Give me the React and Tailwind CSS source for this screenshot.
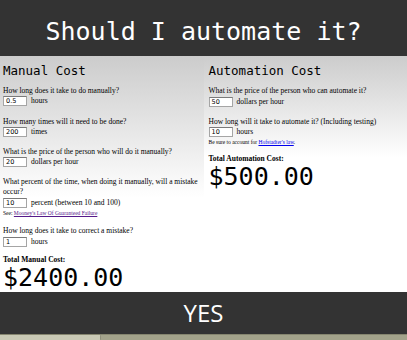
import React from "react";

const serif = { fontFamily: '"Liberation Serif", "Times New Roman", serif' };

function Field({ value, unit }) {
  return (
    <div className="flex items-center h-[10px]">
      <div className="w-[24px] h-[10px] bg-white border border-[#a5a5a5] border-t-[#7a7a7a] text-[6.5px] leading-[8px] pl-[2px] text-black" style={{ fontFamily: '"DejaVu Sans", sans-serif' }}>
        {value}
      </div>
      <span className="ml-[4px] text-[7.5px] leading-[10px]">{unit}</span>
    </div>
  );
}

function Question({ children }) {
  return <div className="text-[7.5px] leading-[10px]">{children}</div>;
}

export default function App() {
  return (
    <div className="w-[407px] h-[340px] flex flex-col bg-white overflow-hidden text-black" style={serif}>
      <div className="h-[56px] bg-[#333333] text-white text-center text-[25px] leading-[28px] pt-[18px]" style={{ fontFamily: '"DejaVu Sans Mono", monospace' }}>
        Should I automate it?
      </div>
      <div className="grid grid-cols-2 items-start flex-1">
        <div className="bg-gradient-to-b from-[#cccccc] to-white to-60% pl-[3px] pt-[7px] pb-[2px] h-full">
          <div className="text-[12.5px] leading-[15px]" style={{ fontFamily: '"DejaVu Sans Mono", monospace' }}>Manual Cost</div>
          <div className="mt-[8px]">
            <Question>How long does it take to do manually?</Question>
            <Field value="0.5" unit="hours" />
          </div>
          <div className="mt-[11px]">
            <Question>How many times will it need to be done?</Question>
            <Field value="200" unit="times" />
          </div>
          <div className="mt-[10px]">
            <Question>What is the price of the person who will do it manually?</Question>
            <Field value="20" unit="dollars per hour" />
          </div>
          <div className="mt-[10px]">
            <Question>What percent of the time, when doing it manually, will a mistake occur?</Question>
            <div className="mt-[1px]"><Field value="10" unit="percent (between 10 and 100)" /></div>
            <div className="text-[5.5px] leading-[9px] mt-[1px]">
              See: <span className="text-[#551a8b] underline">Mooney's Law Of Guaranteed Failure</span>
            </div>
          </div>
          <div className="mt-[8px]">
            <Question>How long does it take to correct a mistake?</Question>
            <div className="mt-[1px]"><Field value="1" unit="hours" /></div>
          </div>
          <div className="mt-[8px] text-[7.5px] leading-[10px] font-bold">Total Manual Cost:</div>
          <div className="text-[25px] leading-[25px]" style={{ fontFamily: '"DejaVu Sans Mono", monospace' }}>$2400.00</div>
        </div>
        <div className="bg-gradient-to-b from-[#cccccc] to-white to-75% pl-[5px] pt-[7px] pb-[2px]">
          <div className="text-[12.5px] leading-[15px]" style={{ fontFamily: '"DejaVu Sans Mono", monospace' }}>Automation Cost</div>
          <div className="mt-[8px]">
            <Question>What is the price of the person who can automate it?</Question>
            <div className="mt-[1px]"><Field value="50" unit="dollars per hour" /></div>
          </div>
          <div className="mt-[10px]">
            <Question>How long will it take to automate it? (Including testing)</Question>
            <Field value="10" unit="hours" />
            <div className="text-[5.5px] leading-[9px] mt-[1px]">
              Be sure to account for <span className="text-[#0000ee] underline">Hofstadter's law</span>.
            </div>
          </div>
          <div className="mt-[7px] text-[7.5px] leading-[10px] font-bold">Total Automation Cost:</div>
          <div className="text-[25px] leading-[25px]" style={{ fontFamily: '"DejaVu Sans Mono", monospace' }}>$500.00</div>
        </div>
      </div>
      <div className="h-[42px] bg-[#333333] text-white flex items-center justify-center text-[24px]" style={{ fontFamily: '"Open Sans", sans-serif' }}>
        YES
      </div>
      <div className="h-[6px] flex bg-[#a3a38b] border-t border-[#85856f]">
        <div className="w-[101px] bg-[#c9c9b5] border-r border-[#8f8f7a] rounded-r-[1px]"></div>
      </div>
    </div>
  );
}
